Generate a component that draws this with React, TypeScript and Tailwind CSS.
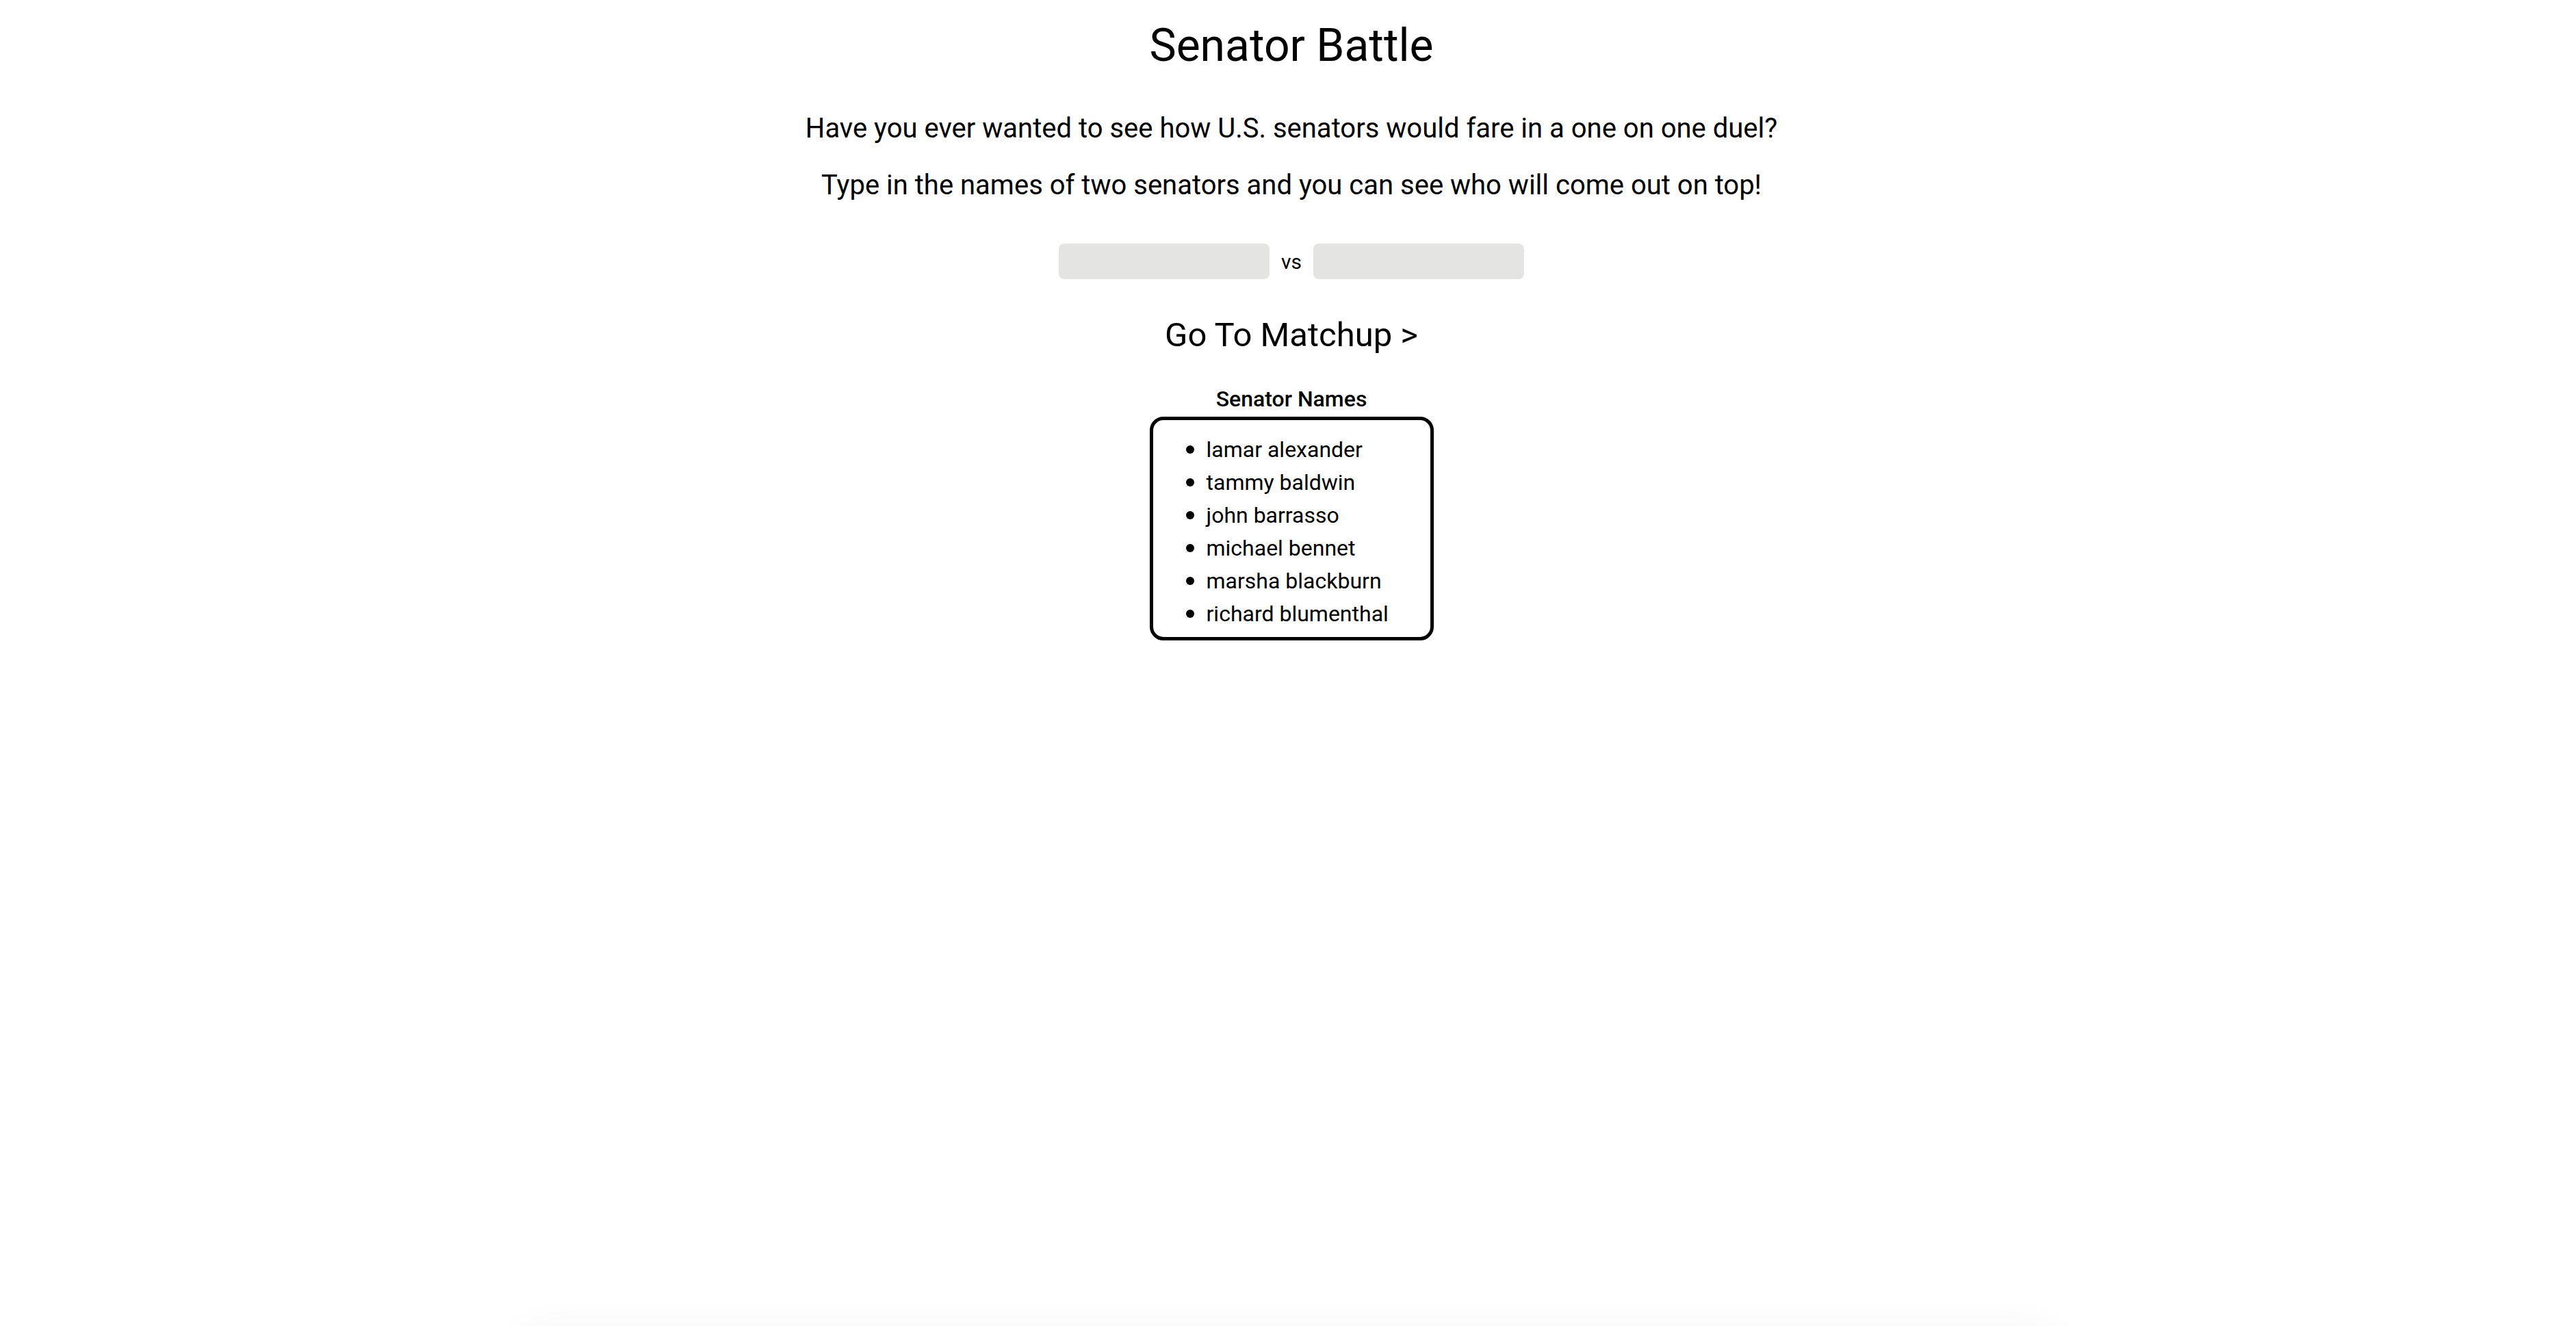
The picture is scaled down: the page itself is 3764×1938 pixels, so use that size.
const senators = [
  "lamar alexander",
  "tammy baldwin",
  "john barrasso",
  "michael bennet",
  "marsha blackburn",
  "richard blumenthal",
];

function SenatorList() {
  return (
    <div className="flex flex-col items-center">
      <h3 className="text-[32px] leading-[35px] font-medium">Senator Names</h3>
      <ul className="mt-[8px] w-[415px] border-[5px] border-black rounded-[20px] pl-[48px] pt-[19px] pb-[10px]">
        {senators.map((name) => (
          <li key={name} className="flex items-center gap-[18px] text-[32px] leading-[48px]">
            <span className="w-[12px] h-[12px] rounded-full bg-black shrink-0" />
            <span>{name}</span>
          </li>
        ))}
      </ul>
    </div>
  );
}

export default function App() {
  return (
    <div
      className="bg-white text-black overflow-hidden"
      style={{ fontFamily: "Roboto, 'Liberation Sans', sans-serif" }}
    >
      <section className="min-h-screen flex flex-col items-center pl-[10px]">
        <h1 className="mt-[29px] text-[66px] leading-[75px] font-normal">Senator Battle</h1>

        <p className="mt-[60px] text-[40px] leading-[47px]">
          Have you ever wanted to see how U.S. senators would fare in a one on one duel?
        </p>
        <p className="mt-[36px] text-[40px] leading-[47px]">
          Type in the names of two senators and you can see who will come out on top!
        </p>

        {/* inputs */}
        <div className="mt-[62px] flex items-center gap-[17px]">
          <input className="w-[308px] h-[52px] rounded-[8px] bg-[#e4e4e3] outline-none" />
          <span className="text-[30px] leading-[35px]">vs</span>
          <input className="w-[308px] h-[52px] rounded-[8px] bg-[#e4e4e3] outline-none" />
        </div>

        <a className="mt-[54px] text-[49px] leading-[56px] cursor-pointer">Go To Matchup &gt;</a>

        <div className="mt-[48px]">
          <SenatorList />
        </div>
      </section>

      {/* card below the fold, only its shadow shows */}
      <div className="mx-auto mt-[22px] w-[2240px] h-[400px] rounded-[40px] bg-white shadow-[0_0_80px_rgba(0,0,0,0.07)]" />
    </div>
  );
}
